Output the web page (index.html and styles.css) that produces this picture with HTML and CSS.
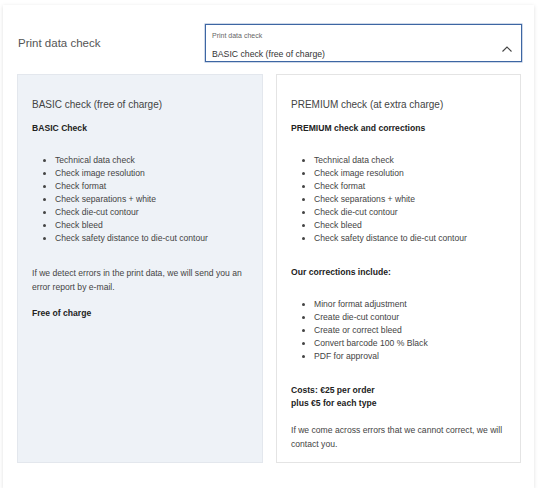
FILE: index.html
```html
<!DOCTYPE html>
<html lang="en">
<head>
  <meta charset="UTF-8" />
  <title>Print data check</title>
  <meta name="viewport" content="width=device-width, initial-scale=1.0" />
  <link rel="stylesheet" href="styles.css">
</head>
<body>
  <div class="card">
    <div class="card-head">
      <h2 class="title">Print data check</h2>
      <div class="select-box">
        <span class="select-label">Print data check</span>
        <span class="select-value">BASIC check (free of charge)</span>
        <svg class="chevron" width="12" height="8" viewBox="0 0 12 8">
          <polyline points="1.5,6.5 6,2 10.5,6.5" fill="none" stroke="#444" stroke-width="1.1" />
        </svg>
      </div>
    </div>

    <div class="options">
      <div class="option option-active">
        <h3>BASIC check (free of charge)</h3>
        <p class="strong">BASIC Check</p>
        <ul>
          <li>Technical data check</li>
          <li>Check image resolution</li>
          <li>Check format</li>
          <li>Check separations + white</li>
          <li>Check die-cut contour</li>
          <li>Check bleed</li>
          <li>Check safety distance to die-cut contour</li>
        </ul>
        <p>If we detect errors in the print data, we will send you an error report by e-mail.</p>
        <p class="strong">Free of charge</p>
      </div>

      <div class="option">
        <h3>PREMIUM check (at extra charge)</h3>
        <p class="strong">PREMIUM check and corrections</p>
        <ul>
          <li>Technical data check</li>
          <li>Check image resolution</li>
          <li>Check format</li>
          <li>Check separations + white</li>
          <li>Check die-cut contour</li>
          <li>Check bleed</li>
          <li>Check safety distance to die-cut contour</li>
        </ul>
        <p class="strong">Our corrections include:</p>
        <ul>
          <li>Minor format adjustment</li>
          <li>Create die-cut contour</li>
          <li>Create or correct bleed</li>
          <li>Convert barcode 100 % Black</li>
          <li>PDF for approval</li>
        </ul>
        <p class="strong">Costs: €25 per order<br>plus €5 for each type</p>
        <p>If we come across errors that we cannot correct, we will contact you.</p>
      </div>
    </div>
  </div>
</body>
</html>
```

FILE: styles.css
```css
* {
  box-sizing: border-box;
}
html, body {
  margin: 0;
  padding: 0;
  background: #fff;
  font-family: 'Liberation Sans', Arial, sans-serif;
  color: #444;
}
.card {
  width: 531px;
  height: 483px;
  margin: 5px 0 0 3px;
  padding: 19px 13px 25px 14px;
  background: #fff;
  box-shadow: 0 1px 4px rgba(0, 0, 0, 0.13);
}
.card-head {
  display: flex;
  align-items: center;
  height: 37px;
}
.title {
  margin: 0;
  padding-left: 1px;
  font-size: 11.5px;
  font-weight: normal;
  color: #555;
}
.select-box {
  position: relative;
  margin-left: auto;
  margin-right: -1px;
  width: 317px;
  height: 38px;
  padding: 6px 6px 0;
  border: 1px solid #3d66a3;
  box-shadow: 0 0 0 0.5px rgba(61, 102, 163, 0.5);
  display: flex;
  flex-direction: column;
}
.select-label {
  font-size: 7px;
  line-height: 10px;
  color: #666;
}
.select-value {
  margin-top: 7px;
  font-size: 8.7px;
  line-height: 12px;
  color: #333;
}
.chevron {
  position: absolute;
  right: 8px;
  top: 20px;
}
.options {
  display: grid;
  grid-template-columns: 246px 245px;
  gap: 13px;
  margin-top: 13px;
  height: 389px;
}
.option {
  padding: 23px 14px 10px;
  border: 1px solid #e4e4e4;
  background: #fff;
  font-size: 8.6px;
}
.option-active {
  background: #eef2f7;
  border-color: #e3e7ed;
}
.option h3 {
  margin: 0 0 10px;
  font-size: 10px;
  line-height: 14px;
  font-weight: normal;
  color: #444;
}
.option p {
  margin: 0 0 13px;
  line-height: 14px;
}
.option p:last-child {
  margin-bottom: 0;
}
.option p.strong {
  font-weight: bold;
  line-height: 13px;
  color: #222;
}
.option h3 + p.strong {
  margin-bottom: 0;
}
.option ul {
  margin: 19px 0 21px;
  padding-left: 23px;
  list-style: disc;
}
.option li {
  line-height: 13px;
}
```
